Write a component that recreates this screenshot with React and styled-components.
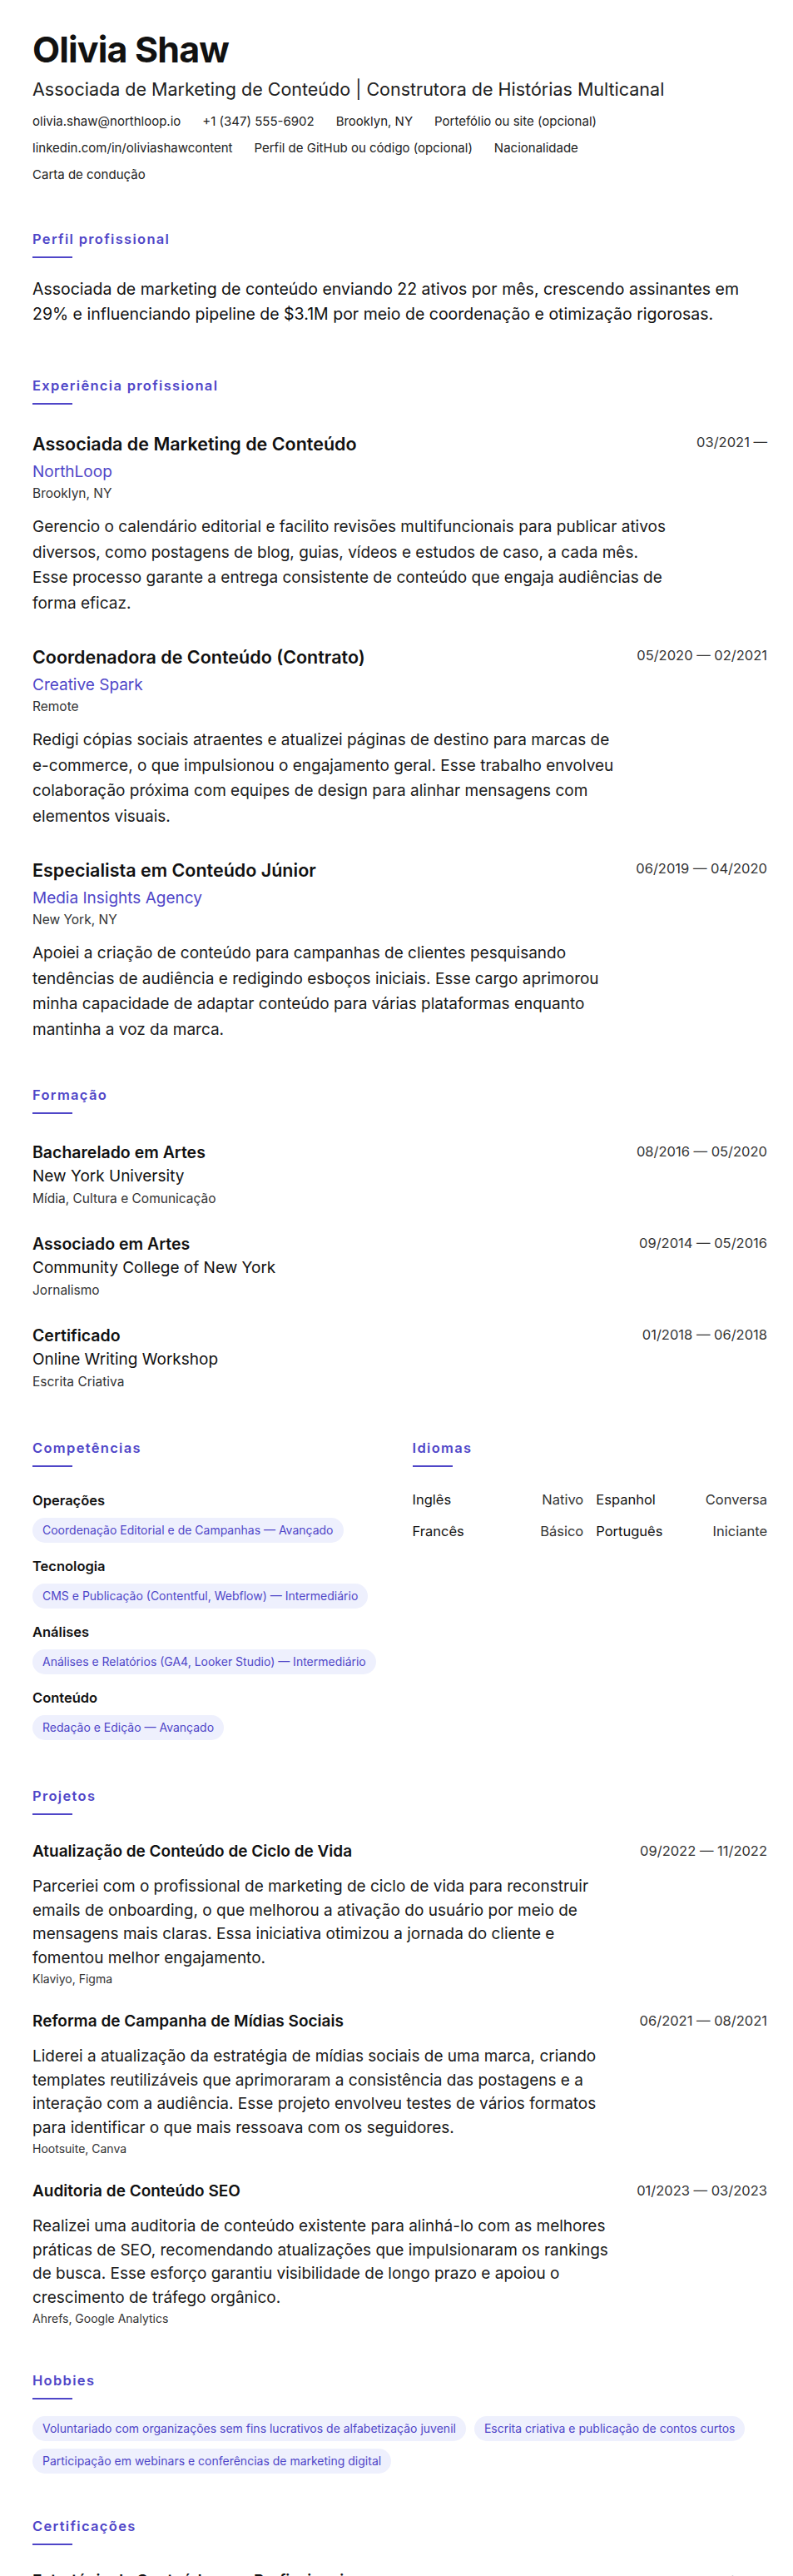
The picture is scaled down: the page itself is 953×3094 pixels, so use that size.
import React from "react"
import styled, { createGlobalStyle } from "styled-components"

const accent = "#4f46c8"

const Global = createGlobalStyle`
  * { box-sizing: border-box; }
  body {
    margin: 0;
    background: #fff;
    color: #111;
    font-family: Inter, "Noto Sans", sans-serif;
  }
`

const Page = styled.main`
  padding: 34px 31px 40px 39px;
`

const Name = styled.h1`
  margin: 0;
  font-size: 43px;
  line-height: 50px;
  font-weight: 700;
  letter-spacing: -0.02em;
`

const Headline = styled.p`
  margin: 8px 0 0;
  font-size: 21.5px;
  line-height: 30px;
  color: #222;
`

const Contacts = styled.ul`
  list-style: none;
  margin: 14px 0 0;
  padding: 0;
  display: flex;
  flex-wrap: wrap;
  column-gap: 26px;
  row-gap: 12px;
  max-width: 800px;
  font-size: 15px;
  line-height: 20px;
  color: #222;
`

const Section = styled.section`
  margin-top: ${p => p.$top || 56}px;
`

const Heading = styled.h2`
  margin: 0;
  font-size: 16.5px;
  line-height: 22px;
  font-weight: 600;
  letter-spacing: 0.08em;
  color: ${accent};
  &::after {
    content: "";
    display: block;
    width: 48px;
    height: 2px;
    margin-top: 10px;
    background: ${accent};
  }
`

const Body = styled.div`
  margin-top: ${p => p.$top || 28}px;
  display: flex;
  flex-direction: column;
  gap: ${p => p.$gap || 0}px;
`

const Summary = styled.p`
  margin: 0;
  font-size: 19.5px;
  line-height: 30px;
  max-width: 880px;
`

const Entry = styled.article`
  display: flex;
  justify-content: space-between;
  align-items: flex-start;
  gap: 24px;
`

const Main = styled.div`
  display: flex;
  flex-direction: column;
`

const Title = styled.h3`
  margin: 0;
  font-size: ${p => p.$size || 21.5}px;
  line-height: ${p => p.$lh || 30}px;
  font-weight: 600;
`

const Company = styled.div`
  font-size: 19px;
  line-height: 30px;
  margin-top: 4px;
  color: ${accent};
`

const Place = styled.div`
  font-size: 15.5px;
  line-height: 22px;
  color: #333;
`

const Text = styled.p`
  margin: ${p => p.$top || 14}px 0 0;
  font-size: ${p => p.$size || 19}px;
  line-height: ${p => p.$lh || 30.5}px;
  max-width: ${p => p.$max || 790}px;
  color: #1a1a1a;
`

const Date = styled.span`
  flex-shrink: 0;
  font-size: 16.5px;
  line-height: 26px;
  color: #333;
`

const School = styled.div`
  font-size: 19px;
  line-height: 30px;
`

const Small = styled.div`
  font-size: ${p => p.$size || 15.5}px;
  line-height: ${p => p.$lh || 24}px;
  color: #333;
`

const Columns = styled.div`
  margin-top: 56px;
  display: grid;
  grid-template-columns: 1fr 1fr;
  column-gap: 30px;
`

const Group = styled.div`
  display: flex;
  flex-direction: column;
  align-items: flex-start;
  gap: 9px;
  margin-bottom: 16px;
`

const GroupName = styled.div`
  font-size: 16.5px;
  line-height: 24px;
  font-weight: 600;
`

const Chips = styled.div`
  display: flex;
  flex-wrap: wrap;
  gap: 9px 10px;
`

const Chip = styled.span`
  display: inline-block;
  max-width: 100%;
  padding: 6px 12px;
  border-radius: 18px;
  background: #eef0fd;
  color: ${accent};
  font-size: 14px;
  line-height: 18px;
`

const Langs = styled.div`
  display: grid;
  grid-template-columns: 1fr 1fr;
  column-gap: 15px;
  row-gap: 16px;
`

const Lang = styled.div`
  display: flex;
  justify-content: space-between;
  font-size: 16.5px;
  line-height: 22px;
  span:last-child { color: #333; }
`

const jobs = [
  {
    title: "Associada de Marketing de Conteúdo",
    company: "NorthLoop",
    place: "Brooklyn, NY",
    date: "03/2021 —",
    text: "Gerencio o calendário editorial e facilito revisões multifuncionais para publicar ativos diversos, como postagens de blog, guias, vídeos e estudos de caso, a cada mês. Esse processo garante a entrega consistente de conteúdo que engaja audiências de forma eficaz.",
  },
  {
    title: "Coordenadora de Conteúdo (Contrato)",
    company: "Creative Spark",
    place: "Remote",
    date: "05/2020 — 02/2021",
    text: "Redigi cópias sociais atraentes e atualizei páginas de destino para marcas de e-commerce, o que impulsionou o engajamento geral. Esse trabalho envolveu colaboração próxima com equipes de design para alinhar mensagens com elementos visuais.",
  },
  {
    title: "Especialista em Conteúdo Júnior",
    company: "Media Insights Agency",
    place: "New York, NY",
    date: "06/2019 — 04/2020",
    text: "Apoiei a criação de conteúdo para campanhas de clientes pesquisando tendências de audiência e redigindo esboços iniciais. Esse cargo aprimorou minha capacidade de adaptar conteúdo para várias plataformas enquanto mantinha a voz da marca.",
  },
]

const education = [
  { title: "Bacharelado em Artes", school: "New York University", field: "Mídia, Cultura e Comunicação", date: "08/2016 — 05/2020" },
  { title: "Associado em Artes", school: "Community College of New York", field: "Jornalismo", date: "09/2014 — 05/2016" },
  { title: "Certificado", school: "Online Writing Workshop", field: "Escrita Criativa", date: "01/2018 — 06/2018" },
]

const skills = [
  { name: "Operações", items: ["Coordenação Editorial e de Campanhas — Avançado"] },
  { name: "Tecnologia", items: ["CMS e Publicação (Contentful, Webflow) — Intermediário"] },
  { name: "Análises", items: ["Análises e Relatórios (GA4, Looker Studio) — Intermediário"] },
  { name: "Conteúdo", items: ["Redação e Edição — Avançado"] },
]

const languages = [
  ["Inglês", "Nativo"],
  ["Espanhol", "Conversa"],
  ["Francês", "Básico"],
  ["Português", "Iniciante"],
]

const projects = [
  {
    title: "Atualização de Conteúdo de Ciclo de Vida",
    date: "09/2022 — 11/2022",
    text: "Parceriei com o profissional de marketing de ciclo de vida para reconstruir emails de onboarding, o que melhorou a ativação do usuário por meio de mensagens mais claras. Essa iniciativa otimizou a jornada do cliente e fomentou melhor engajamento.",
    tools: "Klaviyo, Figma",
  },
  {
    title: "Reforma de Campanha de Mídias Sociais",
    date: "06/2021 — 08/2021",
    text: "Liderei a atualização da estratégia de mídias sociais de uma marca, criando templates reutilizáveis que aprimoraram a consistência das postagens e a interação com a audiência. Esse projeto envolveu testes de vários formatos para identificar o que mais ressoava com os seguidores.",
    tools: "Hootsuite, Canva",
  },
  {
    title: "Auditoria de Conteúdo SEO",
    date: "01/2023 — 03/2023",
    text: "Realizei uma auditoria de conteúdo existente para alinhá-lo com as melhores práticas de SEO, recomendando atualizações que impulsionaram os rankings de busca. Esse esforço garantiu visibilidade de longo prazo e apoiou o crescimento de tráfego orgânico.",
    tools: "Ahrefs, Google Analytics",
  },
]

const hobbies = [
  "Voluntariado com organizações sem fins lucrativos de alfabetização juvenil",
  "Escrita criativa e publicação de contos curtos",
  "Participação em webinars e conferências de marketing digital",
]

const contacts = [
  "olivia.shaw@northloop.io",
  "+1 (347) 555-6902",
  "Brooklyn, NY",
  "Portefólio ou site (opcional)",
  "linkedin.com/in/oliviashawcontent",
  "Perfil de GitHub ou código (opcional)",
  "Nacionalidade",
  "Carta de condução",
]

export default function App() {
  return (
    <Page>
      <Global />
      <header>
        <Name>Olivia Shaw</Name>
        <Headline>Associada de Marketing de Conteúdo | Construtora de Histórias Multicanal</Headline>
        <Contacts>
          {contacts.map(c => <li key={c}>{c}</li>)}
        </Contacts>
      </header>

      <Section $top={56}>
        <Heading>Perfil profissional</Heading>
        <Body $top={22}>
          <Summary>
            Associada de marketing de conteúdo enviando 22 ativos por mês, crescendo assinantes em 29% e influenciando pipeline de $3.1M por meio de coordenação e otimização rigorosas.
          </Summary>
        </Body>
      </Section>

      <Section $top={60}>
        <Heading>Experiência profissional</Heading>
        <Body $top={32} $gap={34}>
          {jobs.map(j => (
            <Entry key={j.title}>
              <Main>
                <Title>{j.title}</Title>
                <Company>{j.company}</Company>
                <Place>{j.place}</Place>
                <Text>{j.text}</Text>
              </Main>
              <Date>{j.date}</Date>
            </Entry>
          ))}
        </Body>
      </Section>

      <Section $top={52}>
        <Heading>Formação</Heading>
        <Body $top={32} $gap={28}>
          {education.map(e => (
            <Entry key={e.title}>
              <Main>
                <Title $size={19.5} $lh={28}>{e.title}</Title>
                <School>{e.school}</School>
                <Small>{e.field}</Small>
              </Main>
              <Date>{e.date}</Date>
            </Entry>
          ))}
        </Body>
      </Section>

      <Columns>
        <section>
          <Heading>Competências</Heading>
          <Body $top={28}>
            {skills.map(s => (
              <Group key={s.name}>
                <GroupName>{s.name}</GroupName>
                <Chips>
                  {s.items.map(i => <Chip key={i}>{i}</Chip>)}
                </Chips>
              </Group>
            ))}
          </Body>
        </section>
        <section>
          <Heading>Idiomas</Heading>
          <Body $top={28}>
            <Langs>
              {languages.map(([l, v]) => (
                <Lang key={l}><span>{l}</span><span>{v}</span></Lang>
              ))}
            </Langs>
          </Body>
        </section>
      </Columns>

      <Section $top={40}>
        <Heading>Projetos</Heading>
        <Body $top={30} $gap={26}>
          {projects.map(p => (
            <Entry key={p.title}>
              <Main>
                <Title $size={19} $lh={28}>{p.title}</Title>
                <Text $top={0} $size={19} $lh={28.5} $max={760}>{p.text}</Text>
                <Small $size={14} $lh={22}>{p.tools}</Small>
              </Main>
              <Date>{p.date}</Date>
            </Entry>
          ))}
        </Body>
      </Section>

      <Section $top={52}>
        <Heading>Hobbies</Heading>
        <Body $top={20}>
          <Chips>
            {hobbies.map(h => <Chip key={h}>{h}</Chip>)}
          </Chips>
        </Body>
      </Section>

      <Section $top={52}>
        <Heading>Certificações</Heading>
        <Body $top={30}>
          <Entry>
            <Main>
              <Title $size={19} $lh={26}>Estratégia de Conteúdo para Profissionais</Title>
              <Small $size={16.5}>Northwestern Online</Small>
            </Main>
            <Date>04/2022</Date>
          </Entry>
        </Body>
      </Section>
    </Page>
  )
}
